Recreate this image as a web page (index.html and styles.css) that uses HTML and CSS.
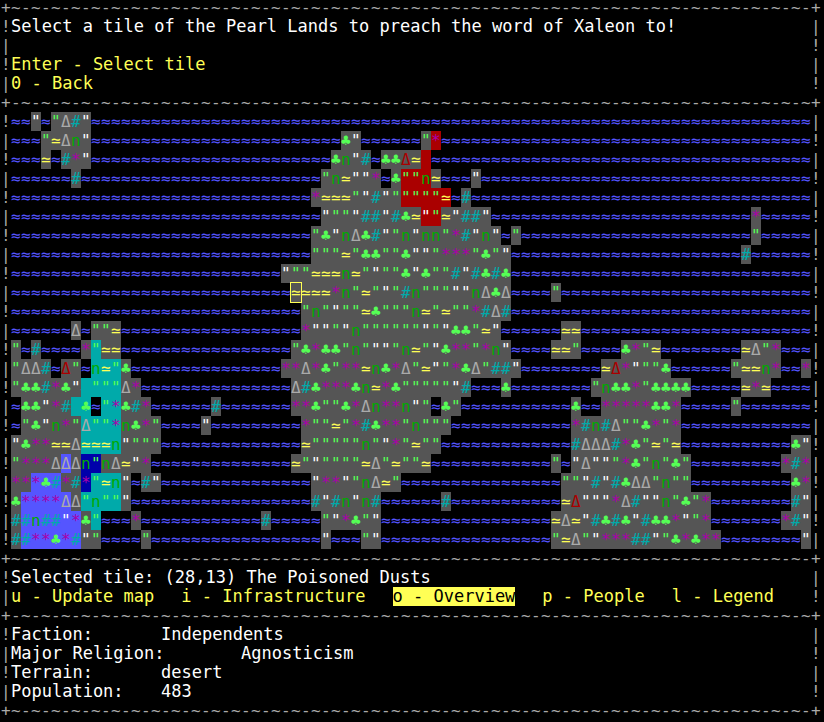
FILE: index.html
```html
<!DOCTYPE html>
<html lang="en">
<head>
<meta charset="utf-8">
<title>Pearl Lands</title>
<link rel="stylesheet" href="styles.css">
</head>
<body>
<main class="screen">
  <div class="rule top" data-first="~"></div>
  <section class="panel" data-rows="4">
    <div class="body">
      <h1 class="line">Select a tile of the Pearl Lands to preach the word of Xaleon to!</h1>
      <div class="line"></div>
      <button class="key" type="button">Enter - Select tile</button>
      <button class="key" type="button">0 - Back</button>
    </div>
  </section>
  <div class="rule" data-first="-"></div>
  <section class="panel" data-rows="23">
    <div class="map" id="map"></div>
  </section>
  <div class="rule" data-first="~"></div>
  <section class="panel" data-rows="2">
    <div class="body">
      <p class="line">Selected tile: (28,13) The Poisoned Dusts</p>
      <nav class="tabs">
        <button class="key" type="button">u - Update map</button>
        <button class="key" type="button">i - Infrastructure</button>
        <button class="key current" type="button">o - Overview</button>
        <button class="key" type="button">p - People</button>
        <button class="key" type="button">l - Legend</button>
      </nav>
    </div>
  </section>
  <div class="rule" data-first="-"></div>
  <section class="panel" data-rows="4">
    <dl class="body">
      <div class="fact"><dt>Faction:</dt><dd>Independents</dd></div>
      <div class="fact long"><dt>Major Religion:</dt><dd>Agnosticism</dd></div>
      <div class="fact"><dt>Terrain:</dt><dd>desert</dd></div>
      <div class="fact"><dt>Population:</dt><dd>483</dd></div>
    </dl>
  </section>
  <div class="rule" data-first="~"></div>
</main>
<script src="map.js"></script>
</body>
</html>
```

FILE: styles.css
```css
* {
  box-sizing: border-box;
}

body {
  margin: 0;
  background: #000;
  color: #fff;
  font: 17px/19px "DejaVu Sans Mono", monospace;
}

.screen {
  padding: 0 3px 0 1px;
}

.rule,
.rail,
.map {
  color: #aaa;
  font-size: 16px;
}

.rule {
  display: grid;
  grid-template-columns: 10px repeat(80, minmax(0, 1fr)) 10px;
  height: 19px;
}

.rule.top {
  height: 17px;
  line-height: 15px;
}

.panel {
  display: grid;
  grid-template-columns: 10px minmax(0, 1fr) 10px;
}

.rail span {
  display: block;
  height: 19px;
}

.body {
  display: flex;
  flex-direction: column;
  align-items: flex-start;
  margin: 0;
}

.line {
  margin: 0;
  min-height: 19px;
  font-size: 17px;
  font-weight: normal;
  white-space: nowrap;
}

.key {
  height: 19px;
  padding: 0;
  border: 0;
  background: none;
  color: #ff5;
  font: inherit;
  white-space: nowrap;
}

.key.current {
  background: #ff5;
  color: #000;
}

.tabs {
  display: flex;
  gap: 27px;
}

.fact {
  display: flex;
}

.fact dt {
  width: 150px;
}

.fact.long dt {
  width: 230px;
}

.fact dd {
  margin: 0;
}

.map {
  display: grid;
  grid-template-columns: repeat(80, minmax(0, 1fr));
  grid-auto-rows: 19px;
}

.land { background: #555; }
.sea { color: #55f; }
.grass, .forest { color: #5f5; }
.snow { color: #fff; }
.swamp { color: #a0a; }
.hill { color: #0a0; }
.town { color: #0aa; }
.desert { color: #ff5; }
.volcano { color: #a00; }

.realm-cyan { background: #0aa; }
.realm-blue { background: #55f; }
.realm-navy { background: #00a; }
.realm-red { background: #a00; }

.cursor {
  outline: 1px solid #ff5;
  z-index: 1;
}
```

FILE: map.js
```javascript
const COLS = 80;

const TERRAIN = {
  '~': ['≈', 'sea'],
  g: ['"', 'land grass'],
  w: ['"', 'land snow'],
  D: ['Δ', 'land'],
  R: ['Δ', 'land volcano'],
  n: ['n', 'land hill'],
  '#': ['#', 'land town'],
  '*': ['*', 'land swamp'],
  c: ['♣', 'land forest'],
  y: ['≃', 'land desert']
};

// Each row lists its stretches as [first column, tiles]; the rest is sea.
const ROWS = [
  [[2, 'w~gD#w']],
  [[3, 'gyDnw'], [33, 'cw'], [41, 'g*']],
  [[3, 'y~#*w'], [32, 'cnw#~ccRyR']],
  [[6, '#'], [31, 'gnyww*~cggny~~~w']],
  [[30, '*yyygw#wgggggy~#']],
  [[31, 'wggw##w#cywgyw##w'], [74, '*']],
  [[30, 'gcwnDc#wgnwnng*#wnw~g'], [74, 'g']],
  [[30, 'gggygccggcwwg***gcgw'], [73, '#']],
  [[27, 'wggyyynygwggcwcgg#w#c#c']],
  [[28, 'yyyy*ngygwg#ngggwwnDcD'], [54, 'g']],
  [[29, 'gngwggycgggnygygg*#D#']],
  [[6, 'D~ggy'], [29, '*wwgwnggggggwgwccgyw'], [55, 'yy']],
  [[0, 'g~#~~~~*gyy'], [28, 'gc*ccgngwwgnygwc**g*nw'], [54, 'yyg'], [61, 'c*gy'], [73, 'yDg*']],
  [[0, 'gDD#~Rg~nygc'], [27, '**D*cg**ync*Dgywg*cDg##w'], [59, 'yR*wggc'], [72, 'gyyn*~~*']],
  [[0, 'gcc#*cw#gggD*'], [28, 'D#c***cny*cgggggw#~~~c'], [58, 'gncc*gcccc'], [73, 'y*y']],
  [[1, 'ccw*##c~g*c#*'], [20, '#'], [28, '**cggc*Dn**nwg~cg'], [56, 'c~~*****cc*'], [72, 'g']],
  [[1, 'gcwn*gDgg*nc*g'], [19, 'w'], [29, '*ggyg*#c**gnggg'], [56, '*#n#Dggc*g*']],
  [[0, 'wc**yyDyyynwggg'], [29, 'ygggggngw*gygg'], [56, '#DDD#*cgygy'], [78, 'cw']],
  [[0, 'g***DDDngnDyw*'], [28, 'ygwggggyDgyggy'], [54, 'g~wDwwg*cgngcg'], [77, '*#*']],
  [[0, '***c#*#*gynw~#w'], [30, 'w**wgnDyg'], [55, 'ggw#w#cDDgngg'], [78, 'c*']],
  [[0, 'c****DDgnggw'], [30, '#w#nwn#'], [43, '#'], [55, 'yRwww*D#wwngcg*'], [78, '#w']],
  [[0, '##n##w*cg~~~*'], [25, '#'], [31, 'gw*cgw'], [54, 'yDyw#c#cw#cc*wg*'], [77, '*#w']],
  [[0, '##**c*#wg'], [13, 'g'], [31, 'w~~~gw'], [54, 'gyDgw***##wgc*c**'], [79, 'w']]
];

// [row, first column, last column, realm]
const REALMS = [
  [1, 42, 42, 'red'], [2, 41, 41, 'red'], [3, 39, 41, 'red'], [4, 39, 43, 'red'], [5, 41, 42, 'red'],
  [12, 8, 8, 'cyan'], [13, 8, 10, 'cyan'], [14, 7, 10, 'cyan'], [15, 6, 7, 'cyan'], [15, 9, 10, 'cyan'],
  [16, 7, 10, 'cyan'], [17, 7, 10, 'cyan'], [18, 5, 5, 'blue'], [18, 7, 8, 'navy'],
  [19, 2, 4, 'blue'], [19, 7, 7, 'navy'], [19, 8, 10, 'cyan'],
  [20, 1, 5, 'blue'], [20, 7, 10, 'cyan'], [21, 1, 6, 'blue'], [21, 8, 8, 'cyan'], [22, 1, 6, 'blue']
];

const CURSOR = { row: 9, col: 28 };

function cell(text, className) {
  const el = document.createElement('span');
  el.textContent = text;
  if (className) el.className = className;
  return el;
}

const map = document.getElementById('map');
ROWS.forEach((stretches, row) => {
  const tiles = Array(COLS).fill('~');
  stretches.forEach(([start, text]) => {
    [...text].forEach((tile, i) => { tiles[start + i] = tile; });
  });
  tiles.forEach((tile, col) => {
    const [glyph, kind] = TERRAIN[tile];
    const el = cell(glyph, kind);
    const realm = REALMS.find(r => r[0] === row && col >= r[1] && col <= r[2]);
    if (realm) el.classList.add('realm-' + realm[3]);
    if (row === CURSOR.row && col === CURSOR.col) el.classList.add('cursor');
    map.append(el);
  });
});

document.querySelectorAll('.rule').forEach(rule => {
  const pair = rule.dataset.first === '~' ? '~-' : '-~';
  rule.append(cell('+'));
  for (let i = 0; i < COLS; i++) rule.append(cell(pair[i % 2]));
  rule.append(cell('+'));
});

function rail(rows, marks) {
  const el = document.createElement('div');
  el.className = 'rail';
  for (let i = 0; i < rows; i++) el.append(cell(marks[i % 2]));
  return el;
}

document.querySelectorAll('.panel').forEach(panel => {
  const rows = Number(panel.dataset.rows);
  panel.prepend(rail(rows, '!|'));
  panel.append(rail(rows, '|!'));
});
```
